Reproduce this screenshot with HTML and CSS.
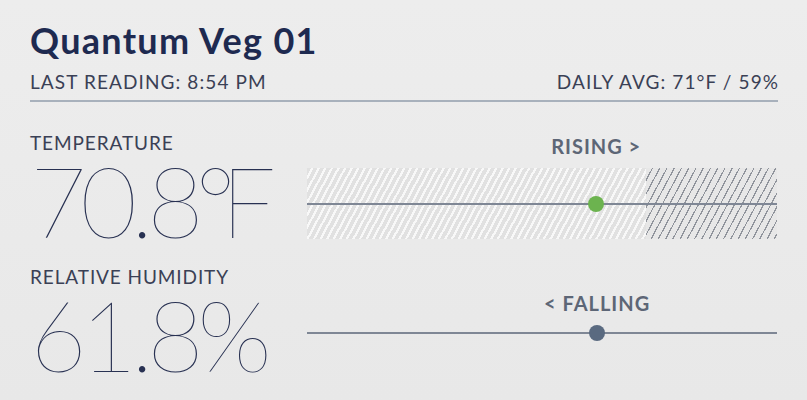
FILE: index.html
```html
<!DOCTYPE html>
<html lang="en">
<head>
<meta charset="utf-8">
<title>Quantum Veg 01</title>
<link rel="stylesheet" href="styles.css">
</head>
<body>
<main class="panel">
  <header class="head">
    <h1 class="title">Quantum Veg 01</h1>
    <div class="meta">
      <span>LAST READING: 8:54 PM</span>
      <span>DAILY AVG: 71°F / 59%</span>
    </div>
  </header>

  <section class="row row-temp">
    <div class="reading">
      <div class="label">TEMPERATURE</div>
      <div class="value">70.8<span class="deg">°</span>F</div>
    </div>
    <div class="trend trend-temp" style="--pos: 61.4%; --split: 72.2%">
      <div class="trend-label">RISING &gt;</div>
      <div class="track track-band">
        <div class="hatch hatch-light"></div>
        <div class="hatch hatch-dark"></div>
        <div class="axis"></div>
        <div class="dot dot-green"></div>
      </div>
    </div>
  </section>

  <section class="row row-hum">
    <div class="reading">
      <div class="label">RELATIVE HUMIDITY</div>
      <div class="value">61.8%</div>
    </div>
    <div class="trend trend-hum" style="--pos: 61.6%">
      <div class="trend-label">&lt; FALLING</div>
      <div class="track track-plain">
        <div class="axis"></div>
        <div class="dot dot-slate"></div>
      </div>
    </div>
  </section>
</main>
</body>
</html>
```

FILE: styles.css
```css
html, body {
  margin: 0;
  padding: 0;
}

body {
  width: 807px;
  height: 400px;
  overflow: hidden;
  background: linear-gradient(180deg, #ededed 0%, #e8e8e8 100%);
  font-family: "Lato", "Noto Sans", sans-serif;
  color: #3a4055;
}

.panel {
  padding: 18px 29px 0 30px;
}

/* header */
.title {
  margin: 0;
  font-size: 36px;
  line-height: 44px;
  font-weight: 700;
  letter-spacing: 1.3px;
  color: #1e2a50;
}

.meta {
  margin-top: 9px;
  display: flex;
  justify-content: space-between;
  font-size: 19px;
  line-height: 22px;
  letter-spacing: 1.1px;
  padding-bottom: 7px;
  border-bottom: 2px solid #a8b1bc;
}

.meta span:last-child {
  margin-right: -1.1px;
}

/* reading rows */
.row {
  display: grid;
  grid-template-columns: 277px 1fr;
}

.row-temp {
  margin-top: 30px;
}

.row-hum {
  margin-top: 21px;
}

.label {
  font-size: 19px;
  line-height: 22px;
  letter-spacing: 0.9px;
  color: #3a4055;
}

.value {
  margin-top: 1px;
  margin-left: 0;
  font-size: 98px;
  line-height: 90px;
  font-weight: 200;
  letter-spacing: -6.5px;
  color: #283152;
}

/* the degree glyph is wide in this face; pull it in */
.deg {
  margin-left: -2px;
  letter-spacing: -15px;
}

/* trend column */
.trend-temp {
  padding-top: 3px;
}

.trend-hum {
  padding-top: 26px;
}

.trend-label {
  display: inline-block;
  margin-left: var(--pos);
  transform: translateX(-50%);
  font-size: 20px;
  line-height: 22px;
  font-weight: 700;
  letter-spacing: 1px;
  color: #5d6676;
  white-space: nowrap;
}

.track {
  position: relative;
  margin-top: 11px;
  margin-right: 1px;
}

.track-band {
  height: 71px;
  display: flex;
}

.track-plain {
  height: 16px;
}

.hatch {
  height: 100%;
}

.hatch-light {
  width: var(--split);
  background: repeating-linear-gradient(118deg,
    #e1e1e1 0px, #e1e1e1 3.6px,
    #f8f8f8 3.6px, #f8f8f8 5.8px);
}

.hatch-dark {
  flex: 1;
  background: repeating-linear-gradient(118deg,
    #e7e7e7 0px, #e7e7e7 5.2px,
    #90949c 5.2px, #90949c 6.4px);
}

.axis {
  position: absolute;
  left: 0;
  right: 0;
  top: 50%;
  height: 2px;
  margin-top: -1px;
  background: #7f8795;
}

.dot {
  position: absolute;
  top: 50%;
  left: var(--pos);
  width: 16px;
  height: 16px;
  border-radius: 50%;
  transform: translate(-50%, -50%);
}

.dot-green {
  background: #6cb34f;
}

.dot-slate {
  background: #5a6a80;
}
```
